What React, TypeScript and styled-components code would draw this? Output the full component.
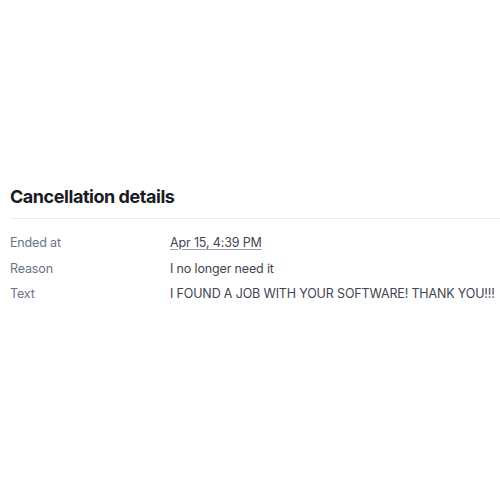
import React from "react";
import styled, { createGlobalStyle } from "styled-components";

const Global = createGlobalStyle`
  html, body { margin: 0; padding: 0; background: #ffffff; }
  body { font-family: Inter, "Noto Sans", sans-serif; -webkit-font-smoothing: antialiased; }
`;

const Page = styled.div`
  padding: 185px 0 0 10px;
  width: 490px;
`;

const Title = styled.h2`
  margin: 0;
  font-size: 18px;
  line-height: 24px;
  font-weight: 700;
  color: #1a1b25;
  letter-spacing: -0.45px;
`;

const Divider = styled.div`
  height: 1px;
  background: #ebeef1;
  margin: 9px 0 14px;
`;

const List = styled.dl`
  margin: 0;
  display: grid;
  grid-template-columns: 160px 1fr;
  row-gap: 5.5px;
  font-size: 12.5px;
  line-height: 20px;
  letter-spacing: -0.15px;
`;

const Label = styled.dt`
  margin: 0;
  color: #687385;
`;

const Value = styled.dd<{ $link?: boolean }>`
  margin: 0;
  color: #414552;
  white-space: nowrap;
  text-decoration: ${(p) => (p.$link ? "underline" : "none")};
  text-decoration-color: #99a0ae;
  text-underline-offset: 2px;
`;

const rows: { label: string; value: string; link?: boolean }[] = [
  { label: "Ended at", value: "Apr 15, 4:39 PM", link: true },
  { label: "Reason", value: "I no longer need it" },
  { label: "Text", value: "I FOUND A JOB WITH YOUR SOFTWARE! THANK YOU!!!" },
];

export default function App() {
  return (
    <>
      <Global />
      <Page>
        <Title>Cancellation details</Title>
        <Divider />
        <List>
          {rows.map((r) => (
            <React.Fragment key={r.label}>
              <Label>{r.label}</Label>
              <Value $link={r.link}>{r.value}</Value>
            </React.Fragment>
          ))}
        </List>
      </Page>
    </>
  );
}
